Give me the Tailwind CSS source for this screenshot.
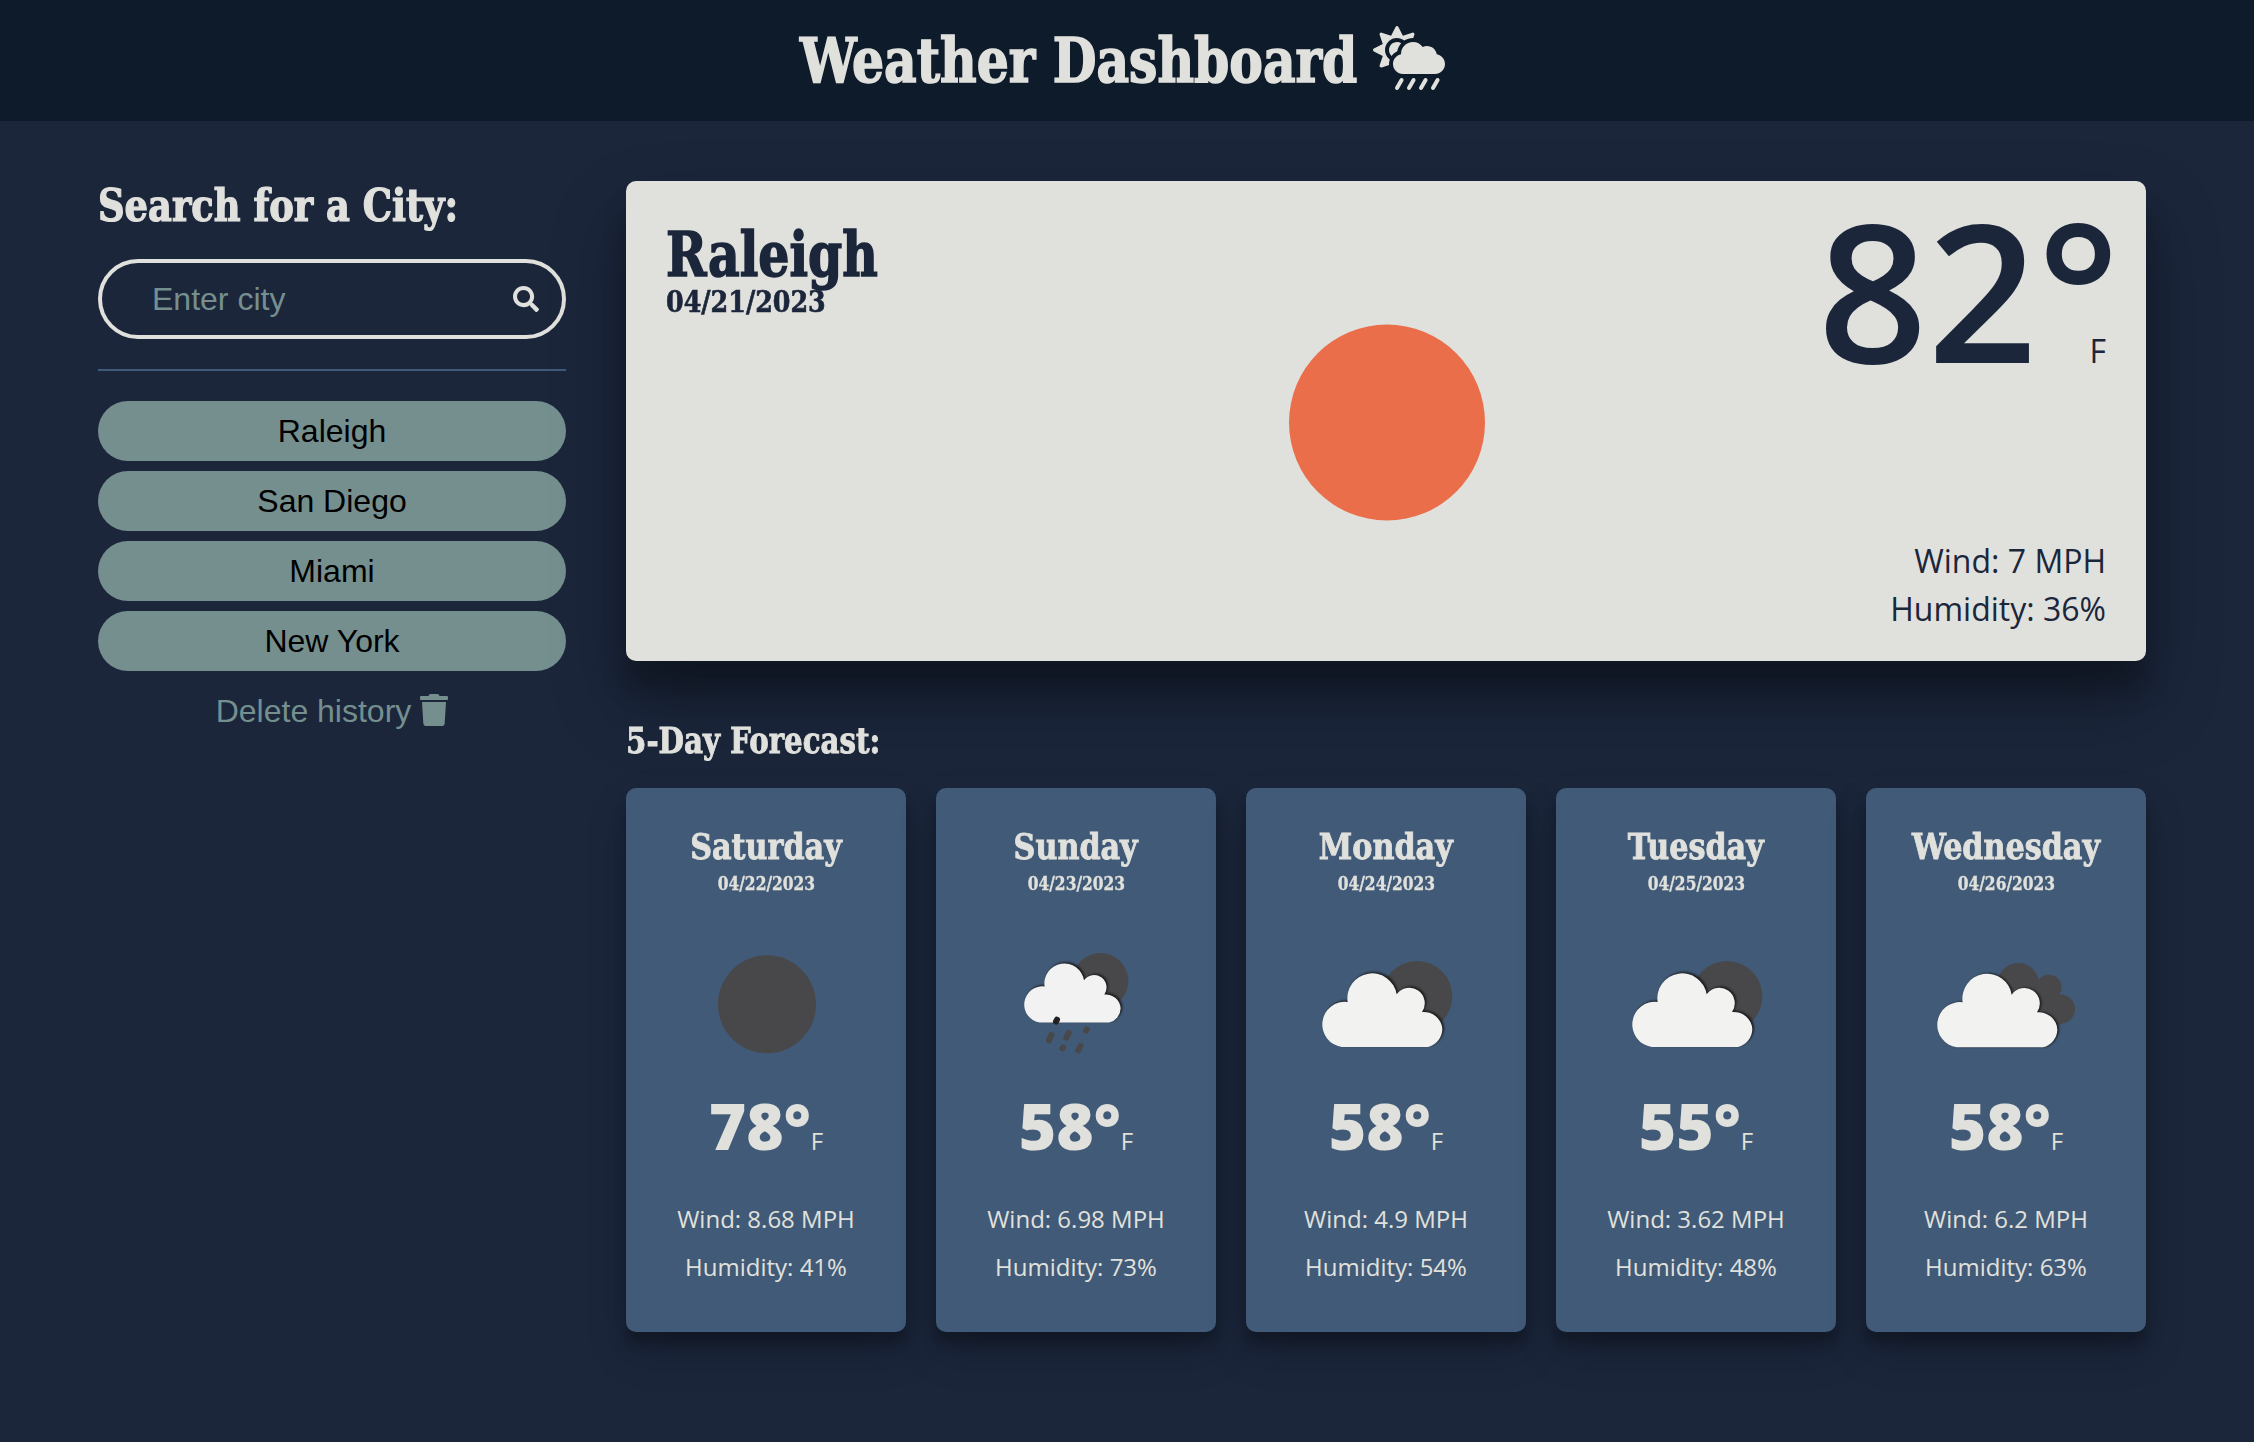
<!DOCTYPE html>
<html lang="en">
<head>
<meta charset="utf-8">
<title>Weather Dashboard</title>
<script src="https://cdn.jsdelivr.net/npm/@tailwindcss/browser@4"></script>
</head>
<body class="min-h-screen bg-[#1b263b] text-[#e0e1dd] font-['Open_Sans',sans-serif]">
<svg class="hidden">
  <defs>
    <filter id="soft" x="-20%" y="-20%" width="140%" height="140%"><feGaussianBlur stdDeviation="3"/></filter>
    <filter id="edge" x="-5%" y="-5%" width="110%" height="110%"><feGaussianBlur stdDeviation="1"/></filter>
    <path id="cloud" d="M125 351A67 68 0 0 1 143 216A74 74 0 1 1 290 193A46 46 0 0 1 366 246A56 54 0 0 1 427 298A56 56 0 0 1 384 351Z"/>
    <clipPath id="sunClip"><circle cx="351" cy="199" r="106"/></clipPath>
    <clipPath id="rainSunClip"><circle cx="301" cy="153" r="84"/></clipPath>
    <path id="backCloud" d="M200 260A62 62 0 0 1 234 150A62 62 0 0 1 356 150A38 38 0 0 1 418 194A43 43 0 1 1 425 281L300 330Z"/>
    <clipPath id="backClip"><use href="#backCloud"/></clipPath>
    <symbol id="clear" viewBox="0 0 600 600"><circle cx="303" cy="301" r="147" fill="#48484a" filter="url(#edge)"/></symbol>
    <symbol id="partly" viewBox="-42 -78 600 600">
      <circle cx="351" cy="199" r="106" fill="#48484a" filter="url(#edge)"/>
      <g clip-path="url(#sunClip)"><use href="#cloud" x="5" y="-4" fill="#1c1c1e" filter="url(#soft)"/></g>
      <use href="#cloud" fill="#f2f2f0" filter="url(#edge)"/>
    </symbol>
    <symbol id="overcast" viewBox="-42 -78 600 600">
      <use href="#backCloud" fill="#48484a" filter="url(#edge)"/>
      <g clip-path="url(#backClip)"><use href="#cloud" x="-10" y="0" fill="#1c1c1e" filter="url(#soft)"/></g>
      <use href="#cloud" x="-15" y="1" fill="#f2f2f0" filter="url(#edge)"/>
    </symbol>
    <symbol id="showers" viewBox="-72 -78 600 600">
      <circle cx="301" cy="153" r="84" fill="#48484a" filter="url(#edge)"/>
      <g clip-path="url(#rainSunClip)"><use href="#cloud" transform="translate(24 -8) scale(.803)" fill="#1c1c1e" filter="url(#soft)"/></g>
      <use href="#cloud" transform="translate(19 -4) scale(.803)" fill="#f2f2f2" filter="url(#edge)"/>
      <g stroke="#48484a" stroke-width="18" stroke-linecap="round">
        <path d="M171 269L168 275" stroke="#222"/>
        <path d="M154 315L147 331M206 309L199 323M260 298L258 302M189 352L187 355M241 348L235 361"/>
      </g>
    </symbol>
  </defs>
</svg>

<header class="flex h-[121px] items-center justify-center gap-4 bg-[#0d1b2a] pr-[9px]">
  <h1 class="w-[557px] origin-left scale-x-[.918] whitespace-nowrap font-['DejaVu_Serif_Condensed','DejaVu_Serif',serif] text-[61px] leading-none font-bold [-webkit-text-stroke:1.5px]">Weather Dashboard</h1>
  <svg class="-mt-[5px] h-16 w-[72px]" viewBox="0 0 576 512" fill="currentColor"><path d="M510.5 225.500c-6.900-37.200-39.300-65.500-78.500-65.500-12.300 0-23.900 3-34.300 8-17.400-24.100-45.600-40-77.700-40-53 0-96 43-96 96 0 .5.200 1.100.200 1.600C187.600 233 160 265.200 160 304c0 44.200 35.800 80 80 80h256c44.200 0 80-35.800 80-80 0-39.200-28.200-71.700-65.500-78.500zm-386.400 34.400c-37.400-37.400-37.400-98.300 0-135.800 34.600-34.600 89.100-36.800 126.700-7.400 20-12.900 43.600-20.700 69.200-20.700.7 0 1.300.2 2 .2l8.900-26.700c3.400-10.200-6.300-19.800-16.500-16.400l-75.300 25.100-35.500-71c-4.800-9.600-18.500-9.600-23.300 0l-35.500 71-75.300-25.100c-10.200-3.400-19.800 6.300-16.400 16.500l25.100 75.300-71 35.500c-9.600 4.800-9.600 18.500 0 23.300l71 35.500-25.100 75.300c-3.400 10.200 6.300 19.800 16.500 16.500l59.200-19.700c-.2-2.400-.7-4.700-.7-7.200 0-12.500 2.300-24.500 6.200-35.900-3.600-2.700-7.100-5.200-10.200-8.300zm69.800-58c4.300-24.500 15.800-46.400 31.900-64-9.800-6.200-21.400-9.900-33.800-9.900-35.300 0-64 28.700-64 64 0 18.700 8.200 35.400 21.100 47.100 11.300-15.900 26.600-28.900 44.800-37.200zm330.600 216.200c-7.600-4.300-17.400-1.800-21.800 6l-36.600 64c-4.400 7.700-1.700 17.400 6 21.800 2.500 1.400 5.200 2.100 7.900 2.100 5.500 0 10.900-2.900 13.900-8.100l36.600-64c4.300-7.700 1.700-17.400-6-21.800zm-96 0c-7.600-4.300-17.400-1.800-21.800 6l-36.600 64c-4.400 7.700-1.700 17.400 6 21.800 2.500 1.400 5.200 2.100 7.900 2.100 5.500 0 10.900-2.900 13.900-8.100l36.600-64c4.300-7.700 1.700-17.400-6-21.800zm-96 0c-7.600-4.300-17.400-1.800-21.800 6l-36.600 64c-4.400 7.700-1.700 17.400 6 21.800 2.500 1.400 5.200 2.100 7.900 2.100 5.500 0 10.900-2.900 13.900-8.100l36.600-64c4.300-7.700 1.700-17.400-6-21.800zm-96 0c-7.600-4.300-17.400-1.800-21.800 6l-36.600 64c-4.400 7.700-1.700 17.400 6 21.800 2.500 1.400 5.200 2.100 7.900 2.100 5.500 0 10.900-2.900 13.900-8.100l36.600-64c4.300-7.700 1.700-17.400-6-21.800z"/></svg>
</header>

<main class="flex gap-[60px] pt-[60px] pr-[108px] pl-[98px]">
  <aside class="w-[468px] shrink-0 font-['Liberation_Sans',Arial,sans-serif] text-[32px]">
    <h2 class="origin-left scale-x-[.91] whitespace-nowrap font-['DejaVu_Serif_Condensed','DejaVu_Serif',serif] text-[45px] leading-[50px] font-bold [-webkit-text-stroke:1.2px]">Search for a City:</h2>
    <form class="mt-7 flex h-20 items-center justify-between rounded-full border-4 border-[#e0e1dd] pr-[23px] pl-[50px]">
      <input class="w-[280px] bg-transparent outline-none placeholder:text-[#758f8f]" placeholder="Enter city">
      <svg class="size-[26px]" viewBox="0 0 512 512" fill="currentColor"><path d="M505 442.700L405.300 343c-4.500-4.500-10.600-7-17-7H372c27.600-35.300 44-79.700 44-128C416 93.100 322.900 0 208 0S0 93.100 0 208s93.100 208 208 208c48.300 0 92.700-16.400 128-44v16.300c0 6.400 2.500 12.500 7 17l99.700 99.700c9.400 9.400 24.600 9.400 33.900 0l28.300-28.300c9.400-9.400 9.400-24.600.1-34zM208 336c-70.700 0-128-57.200-128-128 0-70.700 57.200-128 128-128 70.700 0 128 57.200 128 128 0 70.700-57.200 128-128 128z"/></svg>
    </form>
    <hr class="my-[30px] border-t-2 border-[#415a77]">
    <div class="flex flex-col gap-2.5">
      <button class="h-[60px] rounded-full bg-[#758f8f] text-black">Raleigh</button>
      <button class="h-[60px] rounded-full bg-[#758f8f] text-black">San Diego</button>
      <button class="h-[60px] rounded-full bg-[#758f8f] text-black">Miami</button>
      <button class="h-[60px] rounded-full bg-[#758f8f] text-black">New York</button>
      <button class="flex h-[60px] items-center justify-center gap-[9px] text-[#758f8f]">Delete history
        <svg class="-mt-0.5 h-8 w-7" viewBox="0 0 448 512" fill="currentColor"><path d="M432 32H312l-9.400-18.700A24 24 0 0 0 281.100 0H166.800a23.720 23.720 0 0 0-21.400 13.300L136 32H16A16 16 0 0 0 0 48v32a16 16 0 0 0 16 16h416a16 16 0 0 0 16-16V48a16 16 0 0 0-16-16zM32 128l21.200 339a48 48 0 0 0 47.900 45h245.800a48 48 0 0 0 47.900-45L416 128H32z"/></svg>
      </button>
    </div>
  </aside>

  <div class="w-[1520px]">
    <section class="grid h-[480px] grid-cols-[1fr_400px_1fr] rounded-[10px] bg-[#e0e1dd] px-10 pt-10 pb-7 text-[#1b263b] shadow-[0_38px_76px_rgba(0,0,0,0.3),0_30px_24px_rgba(0,0,0,0.22)]">
      <div class="font-['DejaVu_Serif_Condensed','DejaVu_Serif',serif] font-bold whitespace-nowrap">
        <h2 class="origin-left scale-x-[.892] text-[61px] leading-[68px] [-webkit-text-stroke:1.5px]">Raleigh</h2>
        <p class="origin-left scale-x-[.94] text-[30px] leading-[26px] [-webkit-text-stroke:0.6px]">04/21/2023</p>
      </div>
      <svg class="size-[400px]" viewBox="0 0 400 400"><circle cx="201" cy="201.500" r="98" fill="#eb6e4b"/></svg>
      <div class="flex flex-col items-end justify-between text-[32px]">
        <div class="flex items-baseline leading-none"><span class="text-[192px] leading-[136px] font-semibold">82°</span><span class="-ml-[30px]">F</span></div>
        <div class="text-right leading-[48px]"><p>Wind: 7 MPH</p><p>Humidity: 36%</p></div>
      </div>
    </section>

    <h3 class="mt-[60px] origin-left scale-x-[.93] font-['DejaVu_Serif_Condensed','DejaVu_Serif',serif] text-[35px] leading-[39px] font-bold [-webkit-text-stroke:0.8px]">5-Day Forecast:</h3>
    <section id="forecast" class="mt-7 grid grid-cols-5 gap-[30px]"></section>
  </div>
</main>

<script>
const days = [
  ["Saturday", "04/22/2023", "clear", 78, "8.68", 41],
  ["Sunday", "04/23/2023", "showers", 58, "6.98", 73],
  ["Monday", "04/24/2023", "partly", 58, "4.9", 54],
  ["Tuesday", "04/25/2023", "partly", 55, "3.62", 48],
  ["Wednesday", "04/26/2023", "overcast", 58, "6.2", 63],
];
document.getElementById("forecast").innerHTML = days.map(([day, date, icon, temp, wind, hum]) => `
  <article class="flex h-[544px] flex-col items-center rounded-[10px] bg-[#415a77] pt-[39px] text-2xl shadow-[0_20px_40px_rgba(0,0,0,0.19),0_12px_12px_rgba(0,0,0,0.23)]">
    <h4 class="scale-x-[.96] font-['DejaVu_Serif_Condensed','DejaVu_Serif',serif] text-[35px] leading-10 font-bold [-webkit-text-stroke:0.8px]">${day}</h4>
    <p class="mt-[5px] scale-x-[.93] font-['DejaVu_Serif_Condensed','DejaVu_Serif',serif] text-[18.5px] leading-6 font-bold [-webkit-text-stroke:0.3px]">${date}</p>
    <svg class="mt-2 size-[200px]"><use href="#${icon}"/></svg>
    <div class="-mt-2.5 flex items-baseline leading-[64px]"><span class="text-[64px] font-extrabold">${temp}°</span><span class="leading-none">F</span></div>
    <p class="mt-[37px] leading-[48px]">Wind: ${wind} MPH</p>
    <p class="leading-[48px]">Humidity: ${hum}%</p>
  </article>`).join("");
</script>
</body>
</html>
